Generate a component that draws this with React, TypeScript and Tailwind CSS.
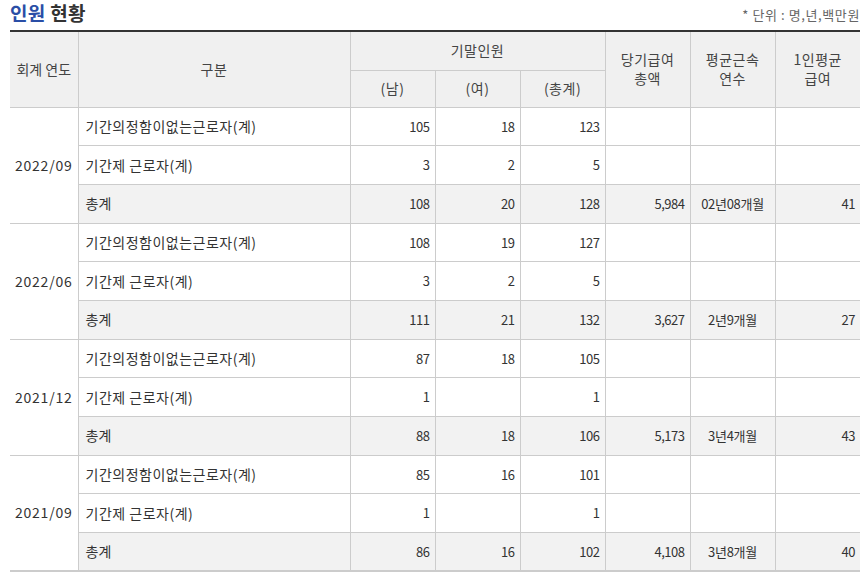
import React from "react";

type Row = { label: string; m: string; f: string; t: string };
type Group = {
  period: string;
  rows: Row[];
  total: Row;
  pay: string;
  tenure: string;
  avg: string;
};

const groups: Group[] = [
  {
    period: "2022/09",
    rows: [
      { label: "기간의정함이없는근로자(계)", m: "105", f: "18", t: "123" },
      { label: "기간제 근로자(계)", m: "3", f: "2", t: "5" },
    ],
    total: { label: "총계", m: "108", f: "20", t: "128" },
    pay: "5,984",
    tenure: "02년08개월",
    avg: "41",
  },
  {
    period: "2022/06",
    rows: [
      { label: "기간의정함이없는근로자(계)", m: "108", f: "19", t: "127" },
      { label: "기간제 근로자(계)", m: "3", f: "2", t: "5" },
    ],
    total: { label: "총계", m: "111", f: "21", t: "132" },
    pay: "3,627",
    tenure: "2년9개월",
    avg: "27",
  },
  {
    period: "2021/12",
    rows: [
      { label: "기간의정함이없는근로자(계)", m: "87", f: "18", t: "105" },
      { label: "기간제 근로자(계)", m: "1", f: "", t: "1" },
    ],
    total: { label: "총계", m: "88", f: "18", t: "106" },
    pay: "5,173",
    tenure: "3년4개월",
    avg: "43",
  },
  {
    period: "2021/09",
    rows: [
      { label: "기간의정함이없는근로자(계)", m: "85", f: "16", t: "101" },
      { label: "기간제 근로자(계)", m: "1", f: "", t: "1" },
    ],
    total: { label: "총계", m: "86", f: "16", t: "102" },
    pay: "4,108",
    tenure: "3년8개월",
    avg: "40",
  },
];

const th = "border border-[#cccccc] bg-[#f0f0f0] font-normal text-center align-middle text-[14px] leading-[19px] tracking-[0.5px]";
const td = "border border-[#cccccc] align-middle";
const num = `${td} text-right pr-[5px] text-[13px] tracking-[-0.5px]`;

export default function App() {
  return (
    <div
      className="w-[868px] h-[578px] bg-white px-[10px] text-[#333333] text-[14px]"
      style={{ fontFamily: '"Noto Sans CJK KR", "Noto Sans", sans-serif' }}
    >
      <div className="flex h-[30px] w-[850px] items-start justify-between">
        <h2 className="text-[19px] font-bold leading-[26px] tracking-[0.3px]">
          <span className="text-[#2a4ea6]">인원</span> <span className="text-[#333333]">현황</span>
        </h2>
        <span className="mt-[6px] text-[13px] leading-[18px] tracking-[0.6px] text-[#666666]">* 단위 : 명,년,백만원</span>
      </div>
      <table className="w-[850px] table-fixed border-collapse border-t-2 border-t-[#333333] border-b-2 border-b-[#cccccc] [&_td:first-child]:border-l-0 [&_th:first-child]:border-l-0 [&_td:last-child]:border-r-0 [&_th:last-child]:border-r-0">
        <colgroup>
          <col className="w-[68px]" />
          <col className="w-[272px]" />
          <col className="w-[85px]" />
          <col className="w-[85px]" />
          <col className="w-[85px]" />
          <col className="w-[85px]" />
          <col className="w-[85px]" />
          <col className="w-[85px]" />
        </colgroup>
        <thead className="text-[#444444]">
          <tr className="h-[39px]">
            <th rowSpan={2} className={`${th} border-t-0 tracking-[0px]`}>회계 연도</th>
            <th rowSpan={2} className={`${th} border-t-0`}>구분</th>
            <th colSpan={3} className={`${th} border-t-0`}>기말인원</th>
            <th rowSpan={2} className={`${th} border-t-0`}>당기급여<br />총액</th>
            <th rowSpan={2} className={`${th} border-t-0`}>평균근속<br />연수</th>
            <th rowSpan={2} className={`${th} border-t-0`}>1인평균<br />급여</th>
          </tr>
          <tr className="h-[37px]">
            <th className={th}>(남)</th>
            <th className={th}>(여)</th>
            <th className={th}>(총계)</th>
          </tr>
        </thead>
        <tbody>
          {groups.map((g) => (
            <React.Fragment key={g.period}>
              {g.rows.map((r, i) => (
                <tr key={r.label} className="h-[38.7px]">
                  {i === 0 && (
                    <td rowSpan={3} className={`${td} text-center tracking-[0.8px]`}>
                      {g.period}
                    </td>
                  )}
                  <td className={`${td} pl-[7px] tracking-[0.5px]`}>{r.label}</td>
                  <td className={num}>{r.m}</td>
                  <td className={num}>{r.f}</td>
                  <td className={num}>{r.t}</td>
                  <td className={num}></td>
                  <td className={num}></td>
                  <td className={num}></td>
                </tr>
              ))}
              <tr className="h-[38.7px] bg-[#f2f2f2]">
                <td className={`${td} pl-[7px]`}>{g.total.label}</td>
                <td className={num}>{g.total.m}</td>
                <td className={num}>{g.total.f}</td>
                <td className={num}>{g.total.t}</td>
                <td className={num}>{g.pay}</td>
                <td className={`${td} text-center text-[13px] tracking-[-0.3px]`}>{g.tenure}</td>
                <td className={num}>{g.avg}</td>
              </tr>
            </React.Fragment>
          ))}
        </tbody>
      </table>
    </div>
  );
}
